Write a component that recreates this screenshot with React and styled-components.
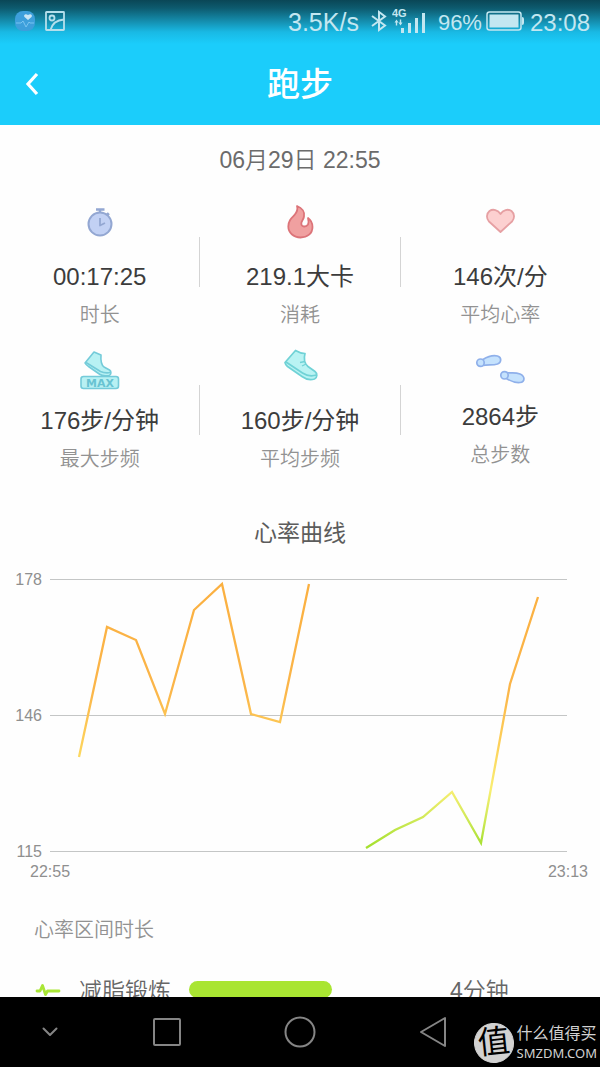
import React from "react";
import styled, { createGlobalStyle } from "styled-components";

const GlobalStyle = createGlobalStyle`
  * {
    box-sizing: border-box;
  }
  body {
    margin: 0;
    background: #fff;
    font-family: "Liberation Sans", "Noto Sans CJK SC", sans-serif;
    font-weight: 400;
  }
`;

// one reading per minute, null = sensor lost contact
const HEART_RATE = [
  null, 137, 167, 164, 147, 171, 177, 147, 145, 177,
  null, 116, 120, 123, 129, 117, 154, 174, null,
];
const MIN_RATE = 115;
const MAX_RATE = 178;
const PLOT_WIDTH = 517;
const PLOT_HEIGHT = 272;

const toPath = (values) => {
  const step = PLOT_WIDTH / (values.length - 1);
  let pen = "M";
  let path = "";
  values.forEach((value, i) => {
    if (value === null) {
      pen = "M";
      return;
    }
    const y = ((MAX_RATE - value) / (MAX_RATE - MIN_RATE)) * PLOT_HEIGHT;
    path += `${pen}${Math.round(i * step)} ${Math.round(y)}`;
    pen = "L";
  });
  return path;
};

const TimerIcon = () => (
  <StatIcon viewBox="0 0 48 40" stroke="#93a7d2" strokeWidth="2">
    <circle cx="24" cy="22" r="11.5" fill="#c2d1f4" />
    <path d="M20 7.5h8.5M24 8v3M31 11l2 2" strokeWidth="2.4" />
    <path d="M24 16v7.5l5-2.5" fill="none" strokeWidth="1.8" />
  </StatIcon>
);

const FlameIcon = () => (
  <StatIcon viewBox="0 0 48 40" stroke="#dc7479" strokeWidth="1.8">
    <path
      d="M21 4C26 6 29 10 28 14.5C27.5 18 25 19 25.3 22C25.7 25 30 25.500 32 22.5C33 20.5 32.5 18 32 16C35.5 18.5 36.5 21.5 36.5 25C36.5 31.5 31.5 35.500 24.5 35.500C17.5 35.500 12.3 30.5 12.3 24.5C12.3 19 15 16.5 18.5 13C21.5 9.5 22 7 21 4Z"
      fill="#f0a0a0"
    />
  </StatIcon>
);

const HeartIcon = () => (
  <StatIcon viewBox="0 0 48 40" stroke="#e6a0a3" strokeWidth="1.8">
    <path
      d="M24.5 30L13 19.5C10 16.5 10.5 11.5 13.5 9C17 6.5 22 8 24.5 12C27 8 32 6.5 35.5 9C38.5 11.5 39 16.5 36 19.5Z"
      fill="#fcd0d0"
    />
  </StatIcon>
);

const MaxCadenceIcon = () => (
  <StatIcon viewBox="0 0 48 40" stroke="#74cbd9" strokeWidth="1.6">
    <path
      d="M18 2L9 13C10 15 11 15.5 12.5 16.5L24 24.5C26 26 29 26 33 25.5C35.5 24.5 35.5 21.5 33.5 20L28 17C25.5 15 24.5 11 25 5Z"
      fill="#b8f1f3"
    />
    <path d="M10 12.5L24.5 21.5Q29 23.5 34.5 22.5" fill="none" />
    <rect x="5" y="26.5" width="37.5" height="12" rx="2.5" fill="#b8f1f3" />
    <MaxText x="24" y="36.5">MAX</MaxText>
  </StatIcon>
);

const ShoeIcon = () => (
  <StatIcon viewBox="0 0 48 40" stroke="#70d2d6" strokeWidth="1.7">
    <path
      d="M19.5 0.5L9 12.5Q9.5 15 11.5 16.5L26 26.5C30 29.5 35 30 38.5 29C41.5 27.5 41.5 23.5 39 21.5L32 16.5C28.5 13.5 27.5 9 29 3.5Q24.5 3.5 19.5 0.5Z"
      fill="#b9f3f3"
    />
    <path d="M10 12L26.5 23C31 26 35.5 26.5 40.5 25" fill="none" />
    <path d="M24 12.5l5-1M26 16l4-2" fill="none" strokeWidth="1.3" />
  </StatIcon>
);

const StepsIcon = () => (
  <StatIcon viewBox="0 0 48 40" stroke="#8fb0ea" strokeWidth="1.7" fill="#c5e2fd">
    <path d="M7 9.5C11 7 17 5 21.5 6C26 7.5 25.5 12.5 21.5 14C17 15.5 12 14.5 7 15.5Z" />
    <circle cx="4.5" cy="12.7" r="3.7" />
    <path d="M31 22.5C35 23.5 39 22 44 24C49.5 26.5 49 32 44 32.5C39.5 33 34.5 31 30.5 28.5Z" />
    <circle cx="28.5" cy="25.3" r="3.7" />
  </StatIcon>
);

const STAT_ROWS = [
  [
    { icon: TimerIcon, value: "00:17:25", label: "时长", gap: 21 },
    { icon: FlameIcon, value: "219.1大卡", label: "消耗", gap: 21 },
    { icon: HeartIcon, value: "146次/分", label: "平均心率", gap: 21 },
  ],
  [
    { icon: MaxCadenceIcon, value: "176步/分钟", label: "最大步频", gap: 17 },
    { icon: ShoeIcon, value: "160步/分钟", label: "平均步频", gap: 17 },
    { icon: StepsIcon, value: "2864步", label: "总步数", gap: 13 },
  ],
];

const StatusIcons = () => (
  <StatusBar>
    <svg width="20" height="20" viewBox="0 0 20 20">
      <rect width="20" height="20" rx="8" fill="#3d9fdb" />
      <path d="M13 9L9.5 6C8 4 10.5 2 13 4C15.5 2 18 4 16.5 6Z" fill="#c9e6f5" />
      <path d="M1 12h5l2-2 3 6 3-5 1 1h4" fill="none" stroke="#79c4f0" />
    </svg>
    <svg width="20" height="20" viewBox="0 0 20 20" fill="none" stroke="#b5dfec" strokeWidth="1.8">
      <rect x="1" y="1" width="18" height="18" rx="0.5" />
      <circle cx="7" cy="7" r="2.5" />
      <path d="M5.5 19C7 13 12 9 19 8.5" />
    </svg>
    <Speed>3.5K/s</Speed>
    <svg width="16" height="22" viewBox="0 0 16 22" fill="none" stroke="#c3e7f1" strokeWidth="2">
      <path d="M1 6l13 9.5L8 20V2l6 4.5L1 16" />
    </svg>
    <svg width="34" height="26" viewBox="0 0 34 26" fill="#c3e7f1">
      <NetworkText x="0" y="9">4G</NetworkText>
      <path d="M4.5 11.5l2 3h-1.3v3h-1.4v-3H2.5zM8.5 17.5l-2-3h1.3v-3h1.4v3h1.3z" />
      <path d="M9 20h3v5H9zM16 15h3v10h-3zM23 10h3v15h-3zM30 5h3v20h-3z" />
    </svg>
    <Battery>96%</Battery>
    <svg width="38" height="20" viewBox="0 0 38 20">
      <rect x="1" y="1" width="34" height="18" rx="2.5" fill="none" stroke="#c3e7f1" strokeWidth="1.5" />
      <rect x="3.5" y="3.5" width="29" height="13" fill="#c3e7f1" />
      <path d="M36 6q2 0 2 2v4q0 2-2 2z" fill="#c3e7f1" />
    </svg>
    <Clock>23:08</Clock>
  </StatusBar>
);

const HeartRateChart = () => (
  <Chart aria-label="心率曲线">
    <ChartBody>
      <YAxis>
        <span>178</span>
        <span>146</span>
        <span>115</span>
      </YAxis>
      <Plot viewBox={`0 0 ${PLOT_WIDTH} ${PLOT_HEIGHT}`} preserveAspectRatio="none">
        <defs>
          <linearGradient id="zones" gradientUnits="userSpaceOnUse" x1="0" y1={PLOT_HEIGHT} x2="0" y2="0">
            <stop offset="0.02" stopColor="#a5e02f" />
            <stop offset="0.12" stopColor="#cfe957" />
            <stop offset="0.23" stopColor="#f9ee72" />
            <stop offset="0.4" stopColor="#fdd05a" />
            <stop offset="0.6" stopColor="#fbb549" />
            <stop offset="1" stopColor="#fbb040" />
          </linearGradient>
        </defs>
        <path d="M0 -0.5H517M0 135.5H517M0 271.5H517" stroke="#c4c6c6" strokeWidth="1" />
        <path d={toPath(HEART_RATE)} fill="none" stroke="url(#zones)" strokeWidth="2.3" />
      </Plot>
    </ChartBody>
    <XAxis>
      <span>22:55</span>
      <span>23:13</span>
    </XAxis>
  </Chart>
);

export default function App() {
  return (
    <Screen>
      <GlobalStyle />
      <Header>
        <StatusIcons />
        <TitleBar>
          <BackButton aria-label="返回">
            <svg width="14" height="24" viewBox="0 0 14 24" fill="none" stroke="#fff" strokeWidth="3.2">
              <path d="M12 2L3 12l9 10" />
            </svg>
          </BackButton>
          <Title>跑步</Title>
        </TitleBar>
      </Header>

      <Main>
        <DateText>06月29日 22:55</DateText>
        <Stats>
          {STAT_ROWS.map((row, i) => (
            <StatRow key={i}>
              {row.map(({ icon: Icon, value, label, gap }, j) => (
                <React.Fragment key={label}>
                  {j > 0 && <Divider />}
                  <Stat>
                    <Icon />
                    <StatValue $gap={gap}>{value}</StatValue>
                    <StatLabel>{label}</StatLabel>
                  </Stat>
                </React.Fragment>
              ))}
            </StatRow>
          ))}
        </Stats>

        <ChartTitle>心率曲线</ChartTitle>
        <HeartRateChart />

        <ZoneTitle>心率区间时长</ZoneTitle>
        <ZoneRow>
          <svg width="26" height="14" viewBox="0 0 26 14" fill="none" stroke="#a9e635" strokeWidth="2.8" strokeLinecap="round" strokeLinejoin="round">
            <path d="M2 8h3l2.500-5.500L10.500 11.500l2-3.500H24" />
          </svg>
          <ZoneText>减脂锻炼</ZoneText>
          <ZoneBar />
          <ZoneText>4分钟</ZoneText>
        </ZoneRow>
      </Main>

      <NavBar>
        <NavButton aria-label="收起">
          <svg width="18" height="12" viewBox="0 0 18 12">
            <path d="M2.500 2.500L9 9l6.500-6.500" />
          </svg>
        </NavButton>
        <NavButton aria-label="最近任务">
          <svg width="30" height="30" viewBox="0 0 30 30">
            <rect x="2" y="2" width="26" height="26" rx="1" />
          </svg>
        </NavButton>
        <NavButton aria-label="主页">
          <svg width="32" height="32" viewBox="0 0 32 32">
            <circle cx="16" cy="16" r="14.5" />
          </svg>
        </NavButton>
        <NavButton aria-label="后退">
          <svg width="28" height="32" viewBox="0 0 28 32">
            <path d="M26 2v28L2 16z" />
          </svg>
        </NavButton>
      </NavBar>

      <Watermark>
        <WatermarkSeal>值</WatermarkSeal>
        <div>
          <WatermarkName>什么值得买</WatermarkName>
          <WatermarkSite>SMZDM.COM</WatermarkSite>
        </div>
      </Watermark>
    </Screen>
  );
}

const Screen = styled.div`
  position: relative;
  display: flex;
  flex-direction: column;
  height: 100vh;
  overflow: hidden;
`;

const Header = styled.header`
  background: linear-gradient(#0a4656 0, #0d5a6e 8px, #1489a8 20px, #19b9e4 32px, #1bcdfb 44px);
  color: #fff;
`;

const StatusBar = styled.div`
  display: flex;
  align-items: center;
  height: 42px;
  padding: 0 10px 0 15px;
  color: #c3e7f1;

  span {
    padding-top: 3px;
  }
  svg + svg {
    margin-left: 10px;
  }
  svg:nth-of-type(4) {
    margin-left: 5px;
  }
`;

const Speed = styled.span`
  margin-left: auto;
  margin-right: 12px;
  font-size: 25px;
`;

const NetworkText = styled.text`
  font-size: 11px;
  font-weight: 700;
`;

const Battery = styled.span`
  margin: 0 4px 0 12px;
  font-size: 22px;
`;

const Clock = styled.span`
  margin-left: 6px;
  font-size: 24px;
`;

const TitleBar = styled.div`
  display: grid;
  grid-template-columns: 64px 1fr 64px;
  align-items: center;
  height: 83px;
`;

const BackButton = styled.button`
  display: flex;
  justify-content: center;
  padding: 0;
  border: 0;
  background: none;
`;

const Title = styled.h1`
  margin: 0;
  padding-top: 3px;
  text-align: center;
  font-size: 33px;
  font-weight: 500;
  line-height: 40px;
`;

const Main = styled.main`
  flex: 1;
  min-height: 0;
  overflow: hidden;
  padding-top: 21px;
  background: #fefefe;
`;

const DateText = styled.p`
  margin: 0;
  text-align: center;
  font-size: 23px;
  font-weight: 350;
  line-height: 28px;
  color: #6b6b6b;
`;

const Stats = styled.section`
  display: grid;
  gap: 23px;
  margin-top: 28px;
`;

const StatRow = styled.div`
  display: grid;
  grid-template-columns: 1fr 1px 1fr 1px 1fr;
`;

const Divider = styled.div`
  height: 50px;
  margin-top: 35px;
  background: #d4d4d4;
`;

const Stat = styled.div`
  display: flex;
  flex-direction: column;
  align-items: center;
`;

const StatIcon = styled.svg`
  width: 48px;
  height: 40px;
  overflow: visible;
  stroke-linejoin: round;
`;

const MaxText = styled.text`
  font-family: "DejaVu Sans", sans-serif;
  font-size: 11px;
  text-anchor: middle;
  fill: #68c3d2;
  stroke-width: 0;
  font-weight: 700;
`;

const StatValue = styled.div`
  margin-top: ${(props) => props.$gap}px;
  font-size: 24px;
  line-height: 28px;
  color: #3c3c3c;
`;

const StatLabel = styled.div`
  margin-top: 12px;
  font-size: 20px;
  font-weight: 350;
  line-height: 24px;
  color: #929292;
`;

const ChartTitle = styled.h2`
  margin: 48px 0 0;
  text-align: center;
  font-size: 23px;
  font-weight: 400;
  line-height: 28px;
  color: #5c5c5c;
`;

const Chart = styled.figure`
  margin: 23px 0 0;
`;

const ChartBody = styled.div`
  display: grid;
  grid-template-columns: 42px 1fr;
  column-gap: 8px;
  align-items: center;
  padding-right: 33px;
`;

const YAxis = styled.div`
  display: flex;
  flex-direction: column;
  justify-content: space-between;
  height: 292px;
  text-align: right;
  font-size: 16px;
  line-height: 20px;
  color: #8f8f8f;
`;

const Plot = styled.svg`
  width: 100%;
  height: 272px;
  overflow: visible;
`;

const XAxis = styled.div`
  display: flex;
  justify-content: space-between;
  padding: 0 12px 0 30px;
  font-size: 16px;
  line-height: 20px;
  color: #8f8f8f;
`;

const ZoneTitle = styled.h3`
  margin: 34px 0 0 34px;
  font-size: 20px;
  font-weight: 350;
  line-height: 28px;
  color: #929292;
`;

const ZoneRow = styled.div`
  display: grid;
  grid-template-columns: 26px 92px 1fr 150px;
  align-items: center;
  column-gap: 18px;
  margin-top: 29px;
  padding-left: 35px;
`;

const ZoneText = styled.span`
  padding-top: 3px;
  font-size: 23px;
  font-weight: 350;
  line-height: 30px;
  color: #666;
`;

const ZoneBar = styled.div`
  width: 59%;
  height: 17px;
  border-radius: 9px;
  background: #a9e532;
`;

const NavBar = styled.nav`
  display: grid;
  grid-template-columns: 3fr 4fr 4fr 4fr 3fr;
  height: 70px;
  background: #000;
`;

const NavButton = styled.button`
  display: flex;
  align-items: center;
  justify-content: center;
  padding: 0;
  border: 0;
  background: none;

  svg {
    fill: none;
    stroke: #858585;
    stroke-width: 2;
    stroke-linejoin: round;
    stroke-linecap: round;
  }
`;

/* sits on top of the navigation bar */
const Watermark = styled.div`
  position: absolute;
  right: 3px;
  bottom: 4px;
  display: flex;
  align-items: center;
  gap: 3px;
  color: #d2d2d2;
`;

const WatermarkSeal = styled.div`
  width: 40px;
  height: 40px;
  border: 1px solid #d2d2d2;
  border-radius: 50%;
  background: #d2d2d2;
  color: #000;
  text-align: center;
  font-size: 32px;
  line-height: 36px;
  transform: rotate(-6deg);
`;

const WatermarkName = styled.div`
  font-size: 16px;
  line-height: 20px;
`;

const WatermarkSite = styled.div`
  font-family: "Noto Sans", sans-serif;
  font-size: 13px;
  line-height: 18px;
`;
